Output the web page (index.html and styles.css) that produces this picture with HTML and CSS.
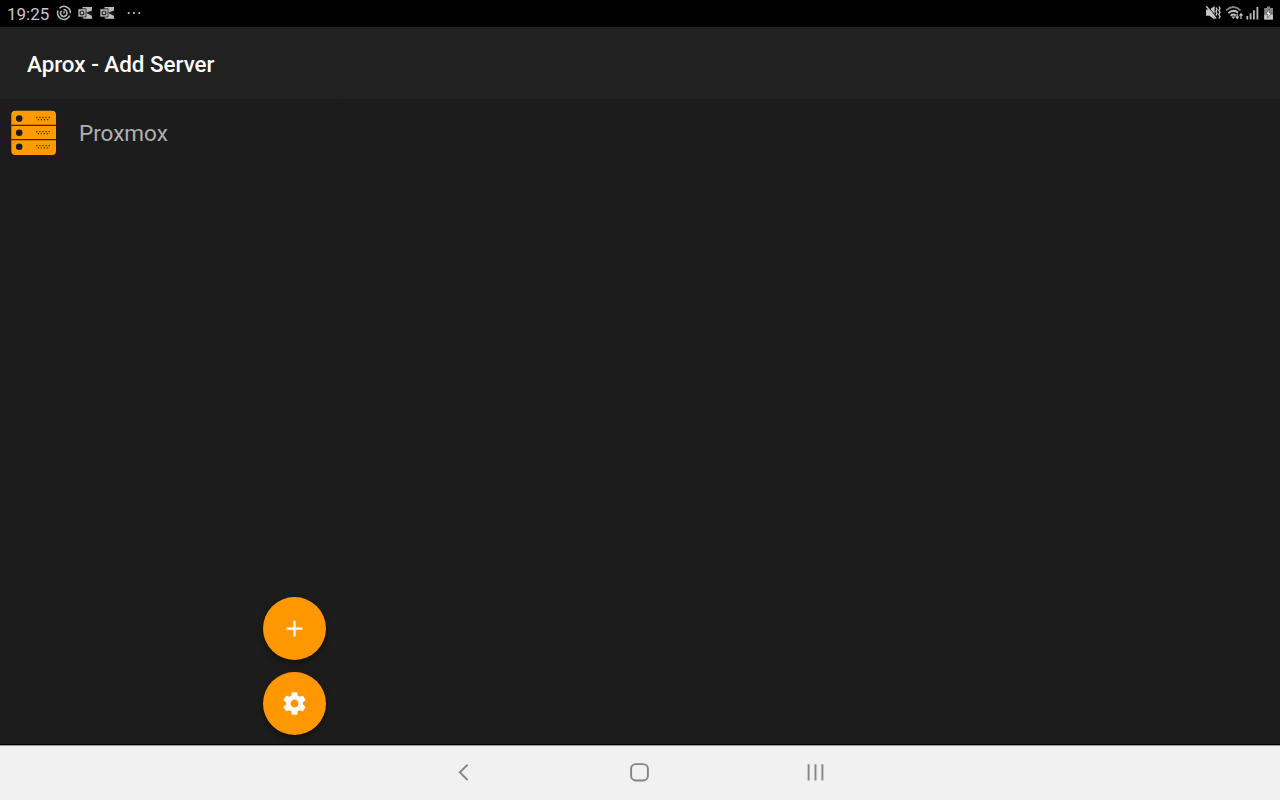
FILE: index.html
```html
<!DOCTYPE html>
<html lang="en">

<head>
  <meta charset="UTF-8">
  <meta name="viewport" content="width=device-width, initial-scale=1.0">
  <title>Aprox - Add Server</title>
  <link rel="stylesheet" href="styles.css">
</head>

<body>
  <!-- status bar -->
  <div class="status">
    <span class="time">19:25</span>
    <svg class="status-left" width="95" height="26" viewBox="50 0 95 26">
      <g fill="none" stroke="#b8b8b8" stroke-width="1.5">
        <path d="M58 10.5A6.3 6.3 0 0 0 69.8 15.5M59.5 8.3A6.3 6.3 0 0 1 70.3 13.2" />
        <path d="M61.6 10.8A3.2 3.2 0 1 0 66.8 12.2Q66.6 9.9 63.5 9.6M64 11.2V13.6" />
      </g>
      <g id="mail">
        <path d="M82.5 7H92V18H82.5Z" fill="#b8b8b8" />
        <path d="M86 12.8L92.6 10.3V16.3Z" fill="#161616" />
        <path d="M85 14.3L93 18.8H83Z" fill="#c0c0c0" />
        <path d="M78 8.8H86V17H78Z" fill="#b8b8b8" stroke="#000" stroke-width=".7" />
        <circle cx="82" cy="12.9" r="1.9" fill="none" stroke="#202020" stroke-width="1.2" />
      </g>
      <use href="#mail" x="22" />
      <g fill="#c4c4c4">
        <circle cx="128.7" cy="13" r="1.1" />
        <circle cx="134" cy="13" r="1.1" />
        <circle cx="139.3" cy="13" r="1.1" />
      </g>
    </svg>
    <svg class="status-right" width="85" height="26" viewBox="1195 0 85 26">
      <!-- muted, vibrating -->
      <path d="M1206 9.5H1209.5L1214.6 6V19.5L1209.5 15.8H1206Z" fill="#c4c4c4" />
      <path d="M1208 6.5L1216.2 16.5" stroke="#000" />
      <path d="M1206.3 6.3L1216.2 18.6M1216 7.5L1217 9.5L1216 11.5L1217 13.5L1216 15.5M1219 6.5L1220 8.5L1218.8 10.5L1220 12.5L1218.8 14.5L1220 16.5L1219 18.5" fill="none" stroke="#c4c4c4" stroke-width="1.4" />
      <!-- wifi -->
      <g fill="none" stroke="#c4c4c4" stroke-width="1.8">
        <path d="M1226 10.3Q1233.3 3.7 1240.5 10.3" stroke="#888" />
        <path d="M1228.4 13Q1233.3 8.7 1238 12.5M1230.6 15.6Q1233.3 13.4 1235.8 15.5" />
      </g>
      <path d="M1231.3 16.6L1233.3 19L1235.3 16.6Z" fill="#c4c4c4" />
      <path d="M1237.2 13.5V18M1235.7 16.5L1237.2 18.5L1238.7 16.5M1241 19V14.2M1239.5 15.6L1241 13.7L1242.5 15.6" fill="none" stroke="#c4c4c4" stroke-width="1.2" />
      <!-- signal -->
      <path d="M1247.3 19.5V16M1250.6 19.5V13.2M1253.9 19.5V10.3M1257.4 19.5V7" stroke="#b8b8b8" stroke-width="1.8" />
      <!-- battery -->
      <path d="M1267 6.5H1270.2V8H1273V19.5H1264.2V8H1267Z" fill="#858585" />
      <path d="M1264.2 14.8H1273V19.5H1264.2Z" fill="#c4c4c4" />
      <path d="M1269.6 9L1265.8 14.3H1268.2L1267.4 18L1271.4 12.9H1269Z" fill="#fff" stroke="#333" stroke-width=".5" />
    </svg>
  </div>

  <header class="toolbar">
    <h1>Aprox - Add Server</h1>
  </header>

  <main class="content">
    <section class="servers">
      <div class="server">
        <svg width="46" height="46" viewBox="0 0 46 46">
          <rect x=".3" y=".7" width="44.7" height="44.2" rx="4" fill="#ff9a00" />
          <path d="M.3 15.4H45M.3 29.6H45" stroke="#3a2500" stroke-width="1.2" />
          <g id="unit">
            <circle cx="8.2" cy="8.6" r="3.3" fill="#1d1914" />
            <path d="M25.2 7.5H39.4" stroke="#3d2806" stroke-width="1.3" stroke-dasharray="1.2 1.9" />
            <path d="M26.7 9.6H37.9" stroke="#3d2806" stroke-width="1.3" stroke-dasharray="1.2 1.9" />
          </g>
          <use href="#unit" y="14.1" />
          <use href="#unit" y="28.2" />
        </svg>
        <span>Proxmox</span>
      </div>

      <div class="actions">
        <button class="fab" aria-label="Add server">
          <svg width="27" height="27" viewBox="0 0 24 24">
            <path d="M12 5V19M5 12H19" stroke="#fff" stroke-width="2" />
          </svg>
        </button>
        <button class="fab" aria-label="Settings">
          <svg width="27" height="27" viewBox="0 0 24 24">
            <path fill="#fff" d="M19.43 12.98c.04-.32.07-.64.07-.98s-.03-.66-.07-.98l2.11-1.65c.19-.15.24-.42.12-.64l-2-3.46c-.12-.22-.39-.3-.61-.22l-2.49 1c-.52-.4-1.08-.73-1.69-.98l-.38-2.65C14.46 2.18 14.25 2 14 2h-4c-.25 0-.46.18-.49.42l-.38 2.65c-.61.25-1.17.59-1.69.98l-2.49-1c-.23-.09-.49 0-.61.22l-2 3.46c-.13.22-.07.49.12.64l2.11 1.65c-.04.32-.07.65-.07.98s.03.66.07.98l-2.11 1.65c-.19.15-.24.42-.12.64l2 3.46c.12.22.39.3.61.22l2.49-1c.52.4 1.08.73 1.69.98l.38 2.65c.03.24.24.42.49.42h4c.25 0 .46-.18.49-.42l.38-2.65c.61-.25 1.17-.59 1.69-.98l2.49 1c.23.09.49 0 .61-.22l2-3.46c.12-.22.07-.49-.12-.64l-2.11-1.65zM12 15.5c-1.93 0-3.5-1.57-3.5-3.5s1.57-3.5 3.5-3.5 3.5 1.57 3.5 3.5-1.57 3.5-3.5 3.5z" />
          </svg>
        </button>
      </div>
    </section>
    <section class="detail"></section>
  </main>

  <!-- back / home / recents -->
  <nav class="navbar">
    <svg width="24" height="24" viewBox="0 0 24 24">
      <path d="M15.6 4.7L7.8 12.3L15.6 20" />
    </svg>
    <svg width="24" height="24" viewBox="0 0 24 24">
      <rect x="3.1" y="4.1" width="16.8" height="16.4" rx="4.8" />
    </svg>
    <svg width="24" height="24" viewBox="0 0 24 24">
      <path d="M4.6 4.2V20.6M11.5 4.2V20.6M18.4 4.2V20.6" />
    </svg>
  </nav>
</body>

</html>
```
FILE: styles.css
```css
* {
  box-sizing: border-box;
  padding: 0;
  margin: 0;
}

body {
  display: flex;
  flex-direction: column;
  height: 100vh;
  overflow: hidden;
  font-family: Roboto, sans-serif;
  background: #1c1c1c;
}

svg {
  display: block;
  flex: none;
}

.status {
  display: flex;
  height: 27px;
  padding-left: 7px;
  background: #000;
}

.time {
  width: 43px;
  font-size: 17px;
  line-height: 28px;
  color: #c8c8c8;
}

.status-right {
  margin-left: auto;
}

.toolbar {
  height: 72px;
  padding-left: 27px;
  background: #212121;
}

.toolbar h1 {
  font-size: 22.4px;
  font-weight: 500;
  line-height: 74px;
  color: #fff;
}

.content {
  display: flex;
  flex: 1;
  border-top: 1px solid #1a1a1a;
  border-bottom: 1px solid #000;
}

.servers {
  display: flex;
  flex-direction: column;
  justify-content: space-between;
  width: 339px;
  padding: 10px 12px 9.5px 11px;
  border-right: 1px solid #1a1a1a;
}

.server {
  display: flex;
  align-items: center;
  gap: 22px;
  font-size: 22.5px;
  line-height: 28px;
  color: #b0b0b0;
}

.actions {
  display: flex;
  flex-direction: column;
  align-items: flex-end;
  gap: 11.5px;
}

.fab {
  display: flex;
  align-items: center;
  justify-content: center;
  width: 63px;
  height: 63px;
  border: 0;
  border-radius: 50%;
  background: #ff9800;
  box-shadow: 0 3px 6px rgba(0, 0, 0, .4);
}

.navbar {
  display: flex;
  justify-content: center;
  gap: 152px;
  height: 55px;
  padding-top: 14px;
  border-top: 1px solid #999;
  background: #f1f1f1;
}

.navbar svg {
  fill: none;
  stroke: #858585;
  stroke-width: 1.9;
}
```
